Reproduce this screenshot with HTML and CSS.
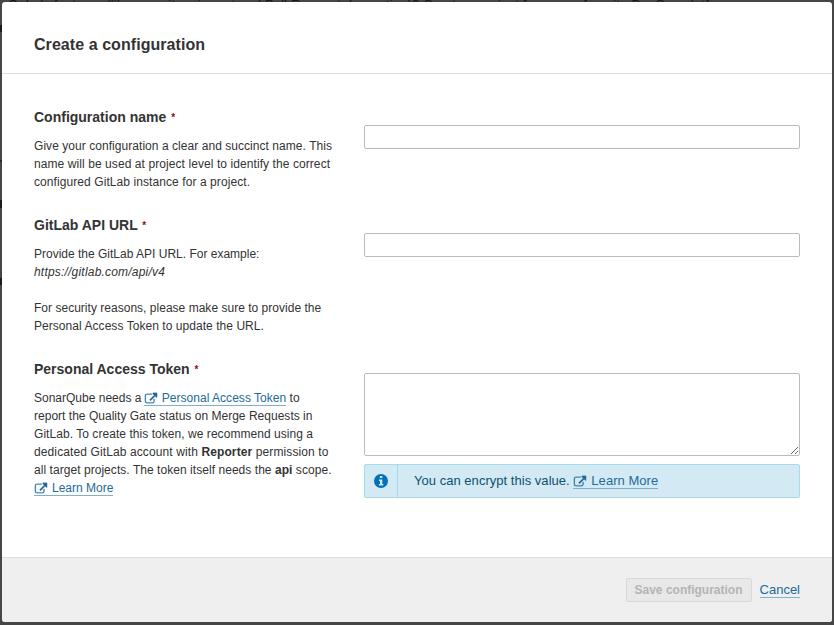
FILE: index.html
```html
<!DOCTYPE html>
<html lang="en">
<head>
<meta charset="utf-8">
<title>Create a configuration</title>
<link rel="stylesheet" href="styles.css">
</head>
<body>
<svg class="defs" aria-hidden="true">
  <symbol id="detach" viewBox="0 0 16 16">
    <path fill="currentColor" stroke="currentColor" stroke-width=".25" d="M12 9.25v2.500A2.250 2.250 0 0 1 9.750 14h-6.500A2.250 2.250 0 0 1 1 11.750v-6.500A2.250 2.250 0 0 1 3.250 3h5.500c.14 0 .25.11.25.25v.5c0 .14-.11.25-.25.25h-5.500C2.560 4 2 4.560 2 5.250v6.500c0 .69.56 1.250 1.250 1.250h6.500c.69 0 1.250-.56 1.250-1.250v-2.500c0-.14.11-.25.25-.25h.5c.14 0 .25.11.25.25zm3-6.750v4.500c0 .27-.23.5-.5.5a.5.5 0 0 1-.35-.15l-1.380-1.370-5.090 5.090c-.1.1-.26.1-.36 0l-.89-.89c-.1-.1-.1-.26 0-.36l5.090-5.090-1.370-1.380A.5.5 0 0 1 10 2.500c0-.27.23-.5.5-.5h4c.27 0 .5.23.5.5z"/>
  </symbol>
</svg>
<p class="backdrop-text">Qube's features (like repository import and Pull Request decoration)? Create a project from your favorite DevOps platform</p>
<i class="mark m1"></i><i class="mark m2"></i><i class="mark m3"></i><i class="mark m4"></i>
<main class="modal">
  <header class="head"><h2>Create a configuration</h2></header>
  <form class="body">
    <section class="row">
      <div class="info">
        <h3>Configuration name <em>*</em></h3>
        <p><span class="l s5">Give your configuration a clear and succinct name. This</span><span class="l s8">name will be used at project level to identify the correct</span><span class="l s8">configured GitLab instance for a project.</span></p>
      </div>
      <div class="field"><input type="text"></div>
    </section>
    <section class="row">
      <div class="info">
        <h3>GitLab API URL <em>*</em></h3>
        <p><span class="l">Provide the GitLab API URL. For example:</span><i class="l s20">https://gitlab.com/api/v4</i></p>
        <p class="second"><span class="l s2">For security reasons, please make sure to provide the</span><span class="l s5">Personal Access Token to update the URL.</span></p>
      </div>
      <div class="field"><input type="text"></div>
    </section>
    <section class="row">
      <div class="info">
        <h3>Personal Access Token <em>*</em></h3>
        <p><span class="l">SonarQube needs a <a class="token" href="#"><svg class="ext"><use href="#detach"/></svg>Personal Access Token</a> to</span><span class="l s2">report the Quality Gate status on Merge Requests in</span><span class="l s5">GitLab. To create this token, we recommend using a</span><span class="l s11">dedicated GitLab account with <b>Reporter</b> permission to</span><span class="l s5">all target projects. The token itself needs the <b>api</b> scope.</span><span class="l"><a href="#"><svg class="ext"><use href="#detach"/></svg>Learn More</a></span></p>
      </div>
      <div class="field tall">
        <textarea></textarea>
        <div class="alert">
          <div class="alert-icon"><svg viewBox="0 0 14 14" width="14" height="14"><circle cx="7" cy="7" r="7" fill="#0271b9"/><path fill="#d4ebf5" d="M5.800 2h2.500v2h-2.500zM5 5.500h3.300v4.500H9.300v1.500H5V10h1V7H5z"/></svg></div>
          <div class="alert-text">You can encrypt this value. <a href="#"><svg class="ext"><use href="#detach"/></svg>Learn More</a></div>
        </div>
      </div>
    </section>
  </form>
  <footer class="foot"><button disabled>Save configuration</button><a href="#">Cancel</a></footer>
</main>
</body>
</html>
```
FILE: styles.css
```css
* { box-sizing: border-box; }
body {
  margin: 0;
  height: 625px;
  padding: 2px 2px 3px;
  overflow: hidden;
  position: relative;
  background: #464646;
  color: #333;
  font-family: "Liberation Sans", Arial, sans-serif;
  font-size: 13px;
}
.defs { position: absolute; width: 0; height: 0; }
.backdrop-text {
  position: absolute;
  left: 8px;
  top: -3px;
  margin: 0;
  color: #151515;
  font-size: 13px;
  line-height: 16px;
  letter-spacing: .2px;
  white-space: nowrap;
}
/* page content showing at the left edge of the overlay */
.mark { position: absolute; left: 0; width: 2px; background: #1c1c1c; }
.m1 { top: 25px; height: 7px; }
.m2 { top: 160px; height: 2px; background: #12304a; }
.m3 { top: 200px; height: 8px; }
.m4 { top: 278px; height: 7px; }
.modal {
  position: relative;
  display: flex;
  flex-direction: column;
  height: 620px;
  border-radius: 3px;
  overflow: hidden;
  background: #fff;
}
.head {
  height: 72px;
  padding: 31px 32px 0;
  border-bottom: 1px solid #ddd;
}
h2, h3, p { margin: 0; }
h2 { font-size: 16px; line-height: 24px; letter-spacing: .06px; }
.body { flex: 1; padding: 31px 32px 0; }
.row { display: grid; grid-template-columns: 330px 436px; margin-bottom: 22px; }
h3 { height: 24px; font-size: 14px; line-height: 24px; margin-bottom: 8px; }
h3 em { margin-left: 1px; color: #a4030f; font-size: 10px; font-style: normal; font-weight: 700; vertical-align: 1px; }
.info p { font-size: 12px; line-height: 18px; }
.info .second { margin-top: 18px; }
.l { display: block; height: 18px; white-space: nowrap; }
.s2 { letter-spacing: .02px; }
.s5 { letter-spacing: .05px; }
.s8 { letter-spacing: .08px; }
.s11 { letter-spacing: .11px; }
.s20 { letter-spacing: .2px; }
.field { padding-top: 20px; }
.field.tall { padding-top: 16px; }
input, textarea {
  display: block;
  width: 100%;
  height: 24px;
  margin: 0;
  border: 1px solid #bbb;
  border-radius: 2px;
  background: #fff;
}
textarea { height: 83px; }
a { color: #236a97; text-decoration: none; border-bottom: 1px solid #7fb0cd; }
.token { letter-spacing: .03px; margin-left: -1px; }
.ext { width: 14px; height: 14px; margin-right: 4px; vertical-align: -3px; }
.alert {
  display: flex;
  height: 34px;
  margin-top: 8px;
  border: 1px solid #a5dcec;
  border-radius: 2px;
  background: #d3eaf5;
  color: #0e516f;
  line-height: 32px;
}
.alert-icon { width: 33px; display: grid; place-items: center; border-right: 1px solid #a5dcec; }
.alert-text { padding-left: 16px; letter-spacing: .03px; }
.foot {
  display: flex;
  align-items: center;
  justify-content: flex-end;
  gap: 8px;
  height: 65px;
  padding-right: 32px;
  border-top: 1px solid #ddd;
  background: #efefef;
}
button {
  width: 126px;
  height: 24px;
  padding: 0;
  border: 1px solid #d8d8d8;
  border-radius: 2px;
  background: #e8e8e8;
  color: #b4b4b4;
  font: bold 12px/22px "Liberation Sans", Arial, sans-serif;
}
```
